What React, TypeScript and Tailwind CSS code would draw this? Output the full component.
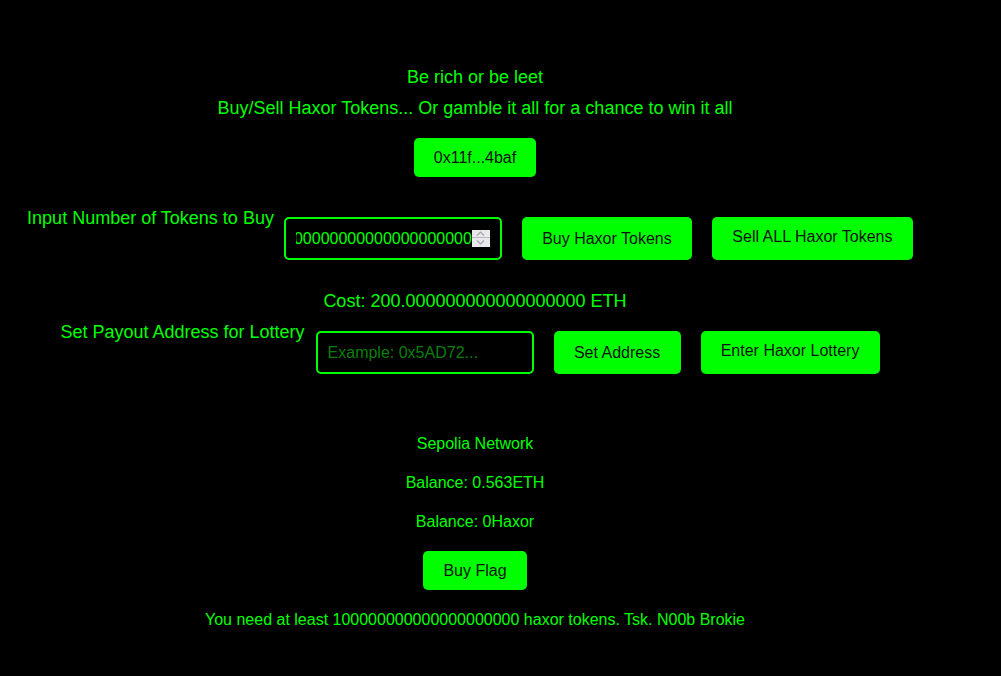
import React from 'react';

const green = 'text-[#00ff00]';

const Btn = ({ children, className = '' }: { children: React.ReactNode; className?: string }) => (
    <button className={`flex shrink-0 items-center justify-center rounded-[5px] bg-[#00ff00] px-5 text-[16px] text-[#111] ${className}`}>
        {children}
    </button>
);

const Spinner = () => (
    <div className="flex h-[17px] w-[18px] shrink-0 flex-col bg-[#e9e9ed]">
        <div className="flex h-[8px] items-center justify-center border-b border-[#b9b9bd]">
            <svg width="9" height="5" viewBox="0 0 9 5" fill="none" stroke="#a3a3a8" strokeWidth="1.2">
                <path d="M1 4.5 L4.5 1 L8 4.5" />
            </svg>
        </div>
        <div className="flex h-[9px] items-center justify-center">
            <svg width="9" height="5" viewBox="0 0 9 5" fill="none" stroke="#a3a3a8" strokeWidth="1.2">
                <path d="M1 0.5 L4.5 4 L8 0.5" />
            </svg>
        </div>
    </div>
);

// 18px lines sit one pixel lower than a plain 21px line box
const big = `h-[21px] text-[18px] leading-[23px] ${green}`;
const small = `h-[18px] text-[16px] leading-[20px] ${green}`;

export default function App() {
    return (
        <div className="min-h-[676px] bg-black pr-[51px] font-['Liberation_Sans',Arial,sans-serif]">
            <div className="flex flex-col items-center pt-[66px]">
                <p className={big}>Be rich or be leet</p>
                <p className={`mt-[10px] ${big}`}>
                    Buy/Sell Haxor Tokens... Or gamble it all for a chance to win it all
                </p>
                <Btn className="mt-[20px] h-[39px] w-[122px]">0x11f...4baf</Btn>

                {/* buy / sell row */}
                <div className="mt-[30px] flex items-start pr-[10px]">
                    <label className={big}>Input Number of Tokens to Buy</label>
                    <div className="ml-[10px] mt-[10px] flex h-[43px] w-[218px] shrink-0 items-center rounded-[5px] border-2 border-[#00ff00] pl-[10px] pr-[10px]">
                        <div className="flex w-[176px] justify-end overflow-hidden">
                            <span className={`whitespace-nowrap text-[16px] ${green}`}>200000000000000000000</span>
                        </div>
                        <Spinner />
                    </div>
                    <Btn className="ml-[20px] mt-[10px] h-[43px] w-[170px]">Buy Haxor Tokens</Btn>
                    <Btn className="ml-[20px] mt-[10px] h-[43px] w-[201px] pb-[4px]">Sell ALL Haxor Tokens</Btn>
                </div>

                <p className={`mt-[30px] ${big}`}>Cost: 200.000000000000000000 ETH</p>

                {/* lottery row */}
                <div className="mt-[10px] flex items-start pr-[10px]">
                    <label className={big}>Set Payout Address for Lottery</label>
                    <input
                        type="text"
                        placeholder="Example: 0x5AD72..."
                        className="ml-[11px] mt-[10px] h-[43px] w-[218px] rounded-[5px] border-2 border-[#00ff00] bg-black px-[10px] text-[16px] text-[#00ff00] outline-none placeholder:text-[#0a7f0a]"
                    />
                    <Btn className="ml-[20px] mt-[10px] h-[43px] w-[127px]">Set Address</Btn>
                    <Btn className="ml-[20px] mt-[10px] h-[43px] w-[179px] pb-[4px]">Enter Haxor Lottery</Btn>
                </div>

                <p className={`mt-[60px] ${small}`}>Sepolia Network</p>
                <p className={`mt-[21px] ${small}`}>Balance: 0.563ETH</p>
                <p className={`mt-[21px] ${small}`}>Balance: 0Haxor</p>
                <Btn className="mt-[21px] h-[39px] w-[104px]">Buy Flag</Btn>
                <p className={`mt-[20px] ${small}`}>
                    You need at least 100000000000000000000 haxor tokens. Tsk. N00b Brokie
                </p>
            </div>
        </div>
    );
}
